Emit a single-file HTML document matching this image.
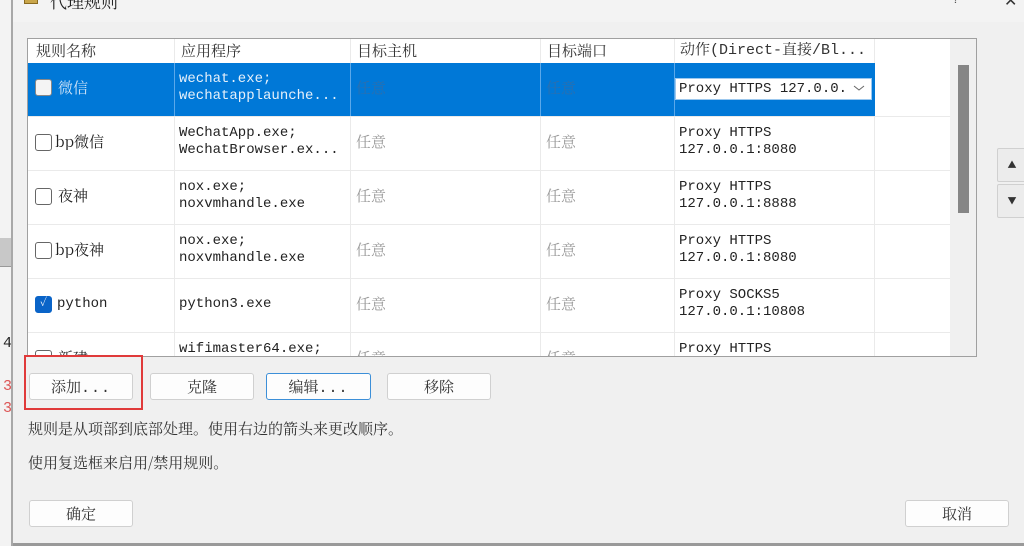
<!DOCTYPE html>
<html><head><meta charset="utf-8"><style>
*{margin:0;padding:0;box-sizing:border-box}
body{width:1024px;height:546px;overflow:hidden;background:#f0f0f0;position:relative;font-family:"Liberation Mono","Noto Serif CJK SC",monospace;font-size:14px;color:#222;-webkit-font-smoothing:antialiased}
.a{position:absolute}
.t{font-family:"Noto Serif CJK SC","Noto Sans CJK SC",serif}
.cell{position:absolute;overflow:hidden;white-space:nowrap;line-height:17px}
.btn{position:absolute;height:27px;background:#fdfdfd;border:1px solid #d0d0d0;border-radius:3px;text-align:center;line-height:25px;font-family:"Noto Serif CJK SC",serif;font-size:15px;color:#333}
.d{font-family:"Liberation Mono",monospace;letter-spacing:1px}
.cb{position:absolute;width:17px;height:17px;border:1px solid #666;border-radius:3px;background:#fff}
.hl{position:absolute;background:#eaeaea}
</style></head><body>
<div class="a" style="left:0;top:0;width:12px;height:546px;background:#f3f3f3"></div>
<div class="a" style="left:0;top:238px;width:12px;height:28px;background:#c8c8c8"></div>
<div class="a" style="left:0;top:266px;width:12px;height:1px;background:#999"></div>
<div class="a" style="left:3px;top:335px;font-size:15px;color:#222">4</div>
<div class="a" style="left:3px;top:378px;font-size:15px;color:#d55">3</div>
<div class="a" style="left:3px;top:400px;font-size:15px;color:#d55">3</div>
<div class="a" style="left:11px;top:0;width:2px;height:546px;background:#a8a8a8"></div>
<div class="a" style="left:13px;top:0;width:1011px;height:22px;background:#f3f3f3"></div>
<div class="a t" style="left:24px;top:-9px;width:14px;height:13px;background:#c9a64a;border:1px solid #8a6a20"></div>
<div class="a t" style="left:50px;top:-12px;font-size:17px">代理规则</div>
<div class="a" style="left:952px;top:-8px;font-size:13px;color:#555">?</div>
<div class="a" style="left:1004px;top:-9px;font-size:16px;color:#333">✕</div>
<div class="a" style="left:13px;top:543px;width:1011px;height:3px;background:#999"></div>

<div class="a" style="left:27px;top:38px;width:950px;height:319px;border:1px solid #a0a0a0;background:#fff;overflow:hidden">
 <div class="a" style="left:922px;top:0;width:27px;height:318px;background:#f0f0f0"></div>
 <div class="a" style="left:930px;top:26px;width:11px;height:148px;background:#868686"></div>
 <div class="hl" style="left:146px;top:0;width:1px;height:318px"></div>
 <div class="hl" style="left:322px;top:0;width:1px;height:318px"></div>
 <div class="hl" style="left:512px;top:0;width:1px;height:318px"></div>
 <div class="hl" style="left:646px;top:0;width:1px;height:318px"></div>
 <div class="hl" style="left:846px;top:0;width:1px;height:318px"></div>
 <div class="hl" style="left:0;top:131px;width:922px;height:1px"></div>
 <div class="hl" style="left:0;top:185px;width:922px;height:1px"></div>
 <div class="hl" style="left:0;top:239px;width:922px;height:1px"></div>
 <div class="hl" style="left:0;top:293px;width:922px;height:1px"></div>
 <div class="hl" style="left:0;top:77px;width:922px;height:1px"></div>
 <div class="cell t" style="left:8px;top:3px;font-size:15px;color:#333">规则名称</div>
 <div class="cell t" style="left:153px;top:3px;font-size:15px;color:#333">应用程序</div>
 <div class="cell t" style="left:329px;top:3px;font-size:15px;color:#333">目标主机</div>
 <div class="cell t" style="left:519px;top:3px;font-size:15px;color:#333">目标端口</div>
 <div class="cell" style="left:652px;top:3px;font-size:15px;color:#333">动作(Direct-直接/Bl...</div>
 <div class="a" style="left:0;top:24px;width:847px;height:53px;background:#0078d7"></div>
 <div class="a" style="left:146px;top:24px;width:1px;height:53px;background:#5aa8ea"></div>
 <div class="a" style="left:322px;top:24px;width:1px;height:53px;background:#5aa8ea"></div>
 <div class="a" style="left:512px;top:24px;width:1px;height:53px;background:#5aa8ea"></div>
 <div class="a" style="left:646px;top:24px;width:1px;height:53px;background:#5aa8ea"></div>
</div>
<div class="a" style="left:27px;top:38px;width:950px;height:319px;overflow:hidden">
 <div class="cb" style="left:8px;top:41px;background:#f4f4f4;border-color:#888"></div>
 <div class="cell t" style="left:31px;top:41px;font-size:15px;color:#cfe3f7">微信</div>
 <div class="cell" style="left:152px;top:33px;color:#e6f0fa">wechat.exe;<br>wechatapplaunche...</div>
 <div class="cell t" style="left:329px;top:41px;font-size:15px;color:#2b6fae">任意</div>
 <div class="cell t" style="left:519px;top:41px;font-size:15px;color:#2b6fae">任意</div>
 <div class="a" style="left:648px;top:40px;width:197px;height:22px;background:#fff;border:1px solid #9cc8ee"></div>
 <div class="cell" style="left:652px;top:43px;color:#222">Proxy HTTPS 127.0.0.</div>
 <svg class="a" style="left:826px;top:46px" width="12" height="8"><path d="M1 2 L6 6 L11 2" fill="none" stroke="#666" stroke-width="1"/></svg>
 <div class="cb" style="left:8px;top:96px"></div>
 <div class="cell t" style="left:28px;top:95px;font-size:15px">bp微信</div>
 <div class="cell" style="left:152px;top:87px">WeChatApp.exe;<br>WechatBrowser.ex...</div>
 <div class="cell t" style="left:329px;top:95px;font-size:15px;color:#999">任意</div>
 <div class="cell t" style="left:519px;top:95px;font-size:15px;color:#999">任意</div>
 <div class="cell" style="left:652px;top:87px">Proxy HTTPS<br>127.0.0.1:8080</div>
 <div class="cb" style="left:8px;top:150px"></div>
 <div class="cell t" style="left:31px;top:149px;font-size:15px">夜神</div>
 <div class="cell" style="left:152px;top:141px">nox.exe;<br>noxvmhandle.exe</div>
 <div class="cell t" style="left:329px;top:149px;font-size:15px;color:#999">任意</div>
 <div class="cell t" style="left:519px;top:149px;font-size:15px;color:#999">任意</div>
 <div class="cell" style="left:652px;top:141px">Proxy HTTPS<br>127.0.0.1:8888</div>
 <div class="cb" style="left:8px;top:204px"></div>
 <div class="cell t" style="left:28px;top:203px;font-size:15px">bp夜神</div>
 <div class="cell" style="left:152px;top:195px">nox.exe;<br>noxvmhandle.exe</div>
 <div class="cell t" style="left:329px;top:203px;font-size:15px;color:#999">任意</div>
 <div class="cell t" style="left:519px;top:203px;font-size:15px;color:#999">任意</div>
 <div class="cell" style="left:652px;top:195px">Proxy HTTPS<br>127.0.0.1:8080</div>
 <div class="cb" style="left:8px;top:258px;background:#0a64c8;border-color:#0a64c8;color:#fff;font-size:11px;line-height:15px;text-align:center">✓</div>
 <div class="cell" style="left:30px;top:258px">python</div>
 <div class="cell" style="left:152px;top:258px">python3.exe</div>
 <div class="cell t" style="left:329px;top:257px;font-size:15px;color:#999">任意</div>
 <div class="cell t" style="left:519px;top:257px;font-size:15px;color:#999">任意</div>
 <div class="cell" style="left:652px;top:249px">Proxy SOCKS5<br>127.0.0.1:10808</div>
 <div class="cb" style="left:8px;top:312px"></div>
 <div class="cell t" style="left:31px;top:311px;font-size:15px">新建</div>
 <div class="cell" style="left:152px;top:303px">wifimaster64.exe;</div>
 <div class="cell t" style="left:329px;top:311px;font-size:15px;color:#999">任意</div>
 <div class="cell t" style="left:519px;top:311px;font-size:15px;color:#999">任意</div>
 <div class="cell" style="left:652px;top:303px">Proxy HTTPS</div>
</div>
<div class="a" style="left:27px;top:356px;width:950px;height:1px;background:#a0a0a0"></div>

<div class="btn" style="left:997px;top:148px;width:30px;height:34px;line-height:32px;font-size:9px;border-radius:2px;background:#ececec">▲</div>
<div class="btn" style="left:997px;top:184px;width:30px;height:34px;line-height:32px;font-size:9px;border-radius:2px;background:#ececec">▼</div>

<div class="a" style="left:24px;top:355px;width:119px;height:55px;border:2px solid #e03a3a"></div>
<div class="btn" style="left:29px;top:373px;width:104px">添加<span class="d">...</span></div>
<div class="btn" style="left:150px;top:373px;width:104px">克隆</div>
<div class="btn" style="left:266px;top:373px;width:105px;border:1px solid #3c8fd8">编辑<span class="d">...</span></div>
<div class="btn" style="left:387px;top:373px;width:104px">移除</div>
<div class="a t" style="left:28px;top:418px;font-size:15px;color:#333">规则是从项部到底部处理。使用右边的箭头来更改顺序。</div>
<div class="a t" style="left:28px;top:452px;font-size:15px;color:#333">使用复选框来启用/禁用规则。</div>
<div class="btn" style="left:29px;top:500px;width:104px">确定</div>
<div class="btn" style="left:905px;top:500px;width:104px">取消</div>
</body></html>
